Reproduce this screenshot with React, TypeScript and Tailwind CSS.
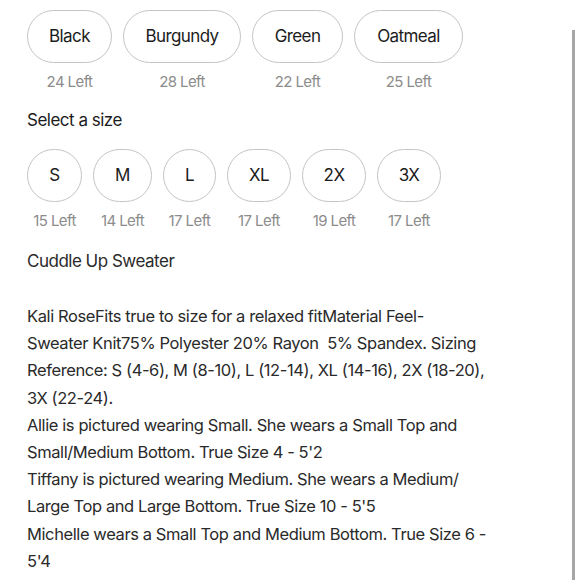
import React from "react";

const colors = [
  { name: "Black", left: 24, w: "w-[85px]" },
  { name: "Burgundy", left: 28, w: "w-[118px]" },
  { name: "Green", left: 22, w: "w-[91px]" },
  { name: "Oatmeal", left: 25, w: "w-[109px]" },
];

const sizes = [
  { name: "S", left: 15, w: "w-[55px]" },
  { name: "M", left: 14, w: "w-[59px]" },
  { name: "L", left: 17, w: "w-[53px]" },
  { name: "XL", left: 17, w: "w-[64px]" },
  { name: "2X", left: 19, w: "w-[64px]" },
  { name: "3X", left: 17, w: "w-[64px]" },
];

const lines = [
  "Kali RoseFits true to size for a relaxed fitMaterial Feel-",
  "Sweater Knit75% Polyester 20% Rayon\u00a0 5% Spandex. Sizing",
  "Reference: S (4-6), M (8-10), L (12-14), XL (14-16), 2X (18-20),",
  "3X (22-24).",
  "Allie is pictured wearing Small. She wears a Small Top and",
  "Small/Medium Bottom. True Size 4 - 5'2",
  "Tiffany is pictured wearing Medium. She wears a Medium/",
  "Large Top and Large Bottom. True Size 10 - 5'5",
  "Michelle wears a Small Top and Medium Bottom. True Size 6 -",
  "5'4",
];

const Option = ({ name, left, w }: { name: string; left: number; w: string }) => (
  <div className="flex flex-col items-center">
    <div
      className={`${w} h-[53px] rounded-full border border-[#c4c4c4] flex items-center justify-center text-[17px] text-[#1c1c1c] tracking-[-0.6px]`}
    >
      {name}
    </div>
    <div className="mt-[9px] text-[15px] text-[#8c8c8c] tracking-[-0.6px] leading-[20px]">
      {left} Left
    </div>
  </div>
);

export default function App() {
  return (
    <div
      className="relative w-[580px] h-[580px] overflow-hidden bg-white pl-[27px] pt-[10px]"
      style={{ fontFamily: "Inter, 'Noto Sans', sans-serif" }}
    >
      <div className="flex gap-[11px]">
        {colors.map((c) => (
          <Option key={c.name} {...c} />
        ))}
      </div>

      <div className="mt-[16px] text-[17px] text-[#1c1c1c] tracking-[-0.5px] leading-[24px]">
        Select a size
      </div>

      <div className="mt-[17px] flex gap-[11px]">
        {sizes.map((s) => (
          <Option key={s.name} {...s} />
        ))}
      </div>

      <div className="mt-[18px] text-[17px] text-[#2a2a2a] tracking-[-0.5px] leading-[24px]">
        Cuddle Up Sweater
      </div>

      <div className="mt-[30px] text-[16.5px] text-[#2a2a2a] tracking-[-0.4px] leading-[27.2px]">
        {lines.map((l, i) => (
          <div key={i} className="whitespace-nowrap">
            {l}
          </div>
        ))}
      </div>

      <div className="absolute right-[5px] top-[30px] bottom-0 w-[3px] bg-[#a6a6a6]" />
    </div>
  );
}
